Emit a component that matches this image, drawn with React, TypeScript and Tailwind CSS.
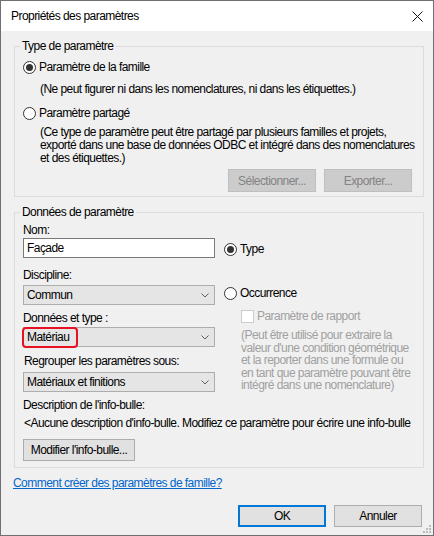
import React from "react";

const Radio = ({ checked }: { checked?: boolean }) => (
  <span className="w-[13px] h-[13px] shrink-0 rounded-full border border-[#333333] bg-white flex items-center justify-center">
    {checked && <span className="w-[7px] h-[7px] rounded-full bg-[#333333]" />}
  </span>
);

const Combo = ({ value, highlight }: { value: string; highlight?: boolean }) => (
  <div className="relative h-[20px] w-[192px] bg-[#e5e5e5] border border-[#adadad] flex items-center pl-[3px]">
    <span>{value}</span>
    <svg className="ml-auto mr-[5px]" width="8" height="5" viewBox="0 0 8 5">
      <path d="M0.5 0.5 L4 4 L7.5 0.5" stroke="#606060" fill="none" />
    </svg>
    {highlight && (
      <span className="absolute left-[-2px] top-[-1px] w-[56px] h-[21px] border-2 border-[#e81123] rounded-[4px]" />
    )}
  </div>
);

const Btn = ({ label, disabled, primary, w }: { label: string; disabled?: boolean; primary?: boolean; w: string }) => (
  <button
    className={
      disabled
        ? `${w} h-[23px] bg-[#cccccc] border border-[#bfbfbf] text-[#838383]`
        : primary
        ? `${w} h-[22px] bg-[#e1e1e1] border-2 border-[#0078d7] text-black`
        : `${w} h-[22px] bg-[#e1e1e1] border border-[#adadad] text-black`
    }
  >
    {label}
  </button>
);

export default function App() {
  return (
    <div className="relative w-[434px] h-[536px] border border-[#707070] bg-[#f0f0f0] text-black text-[12px] leading-[14px] tracking-[-0.55px] font-['Liberation_Sans',Arial,sans-serif] overflow-hidden">
      {/* title bar */}
      <div className="h-[30px] bg-white flex items-center pl-[10px] pr-[10px]">
        <span className="text-[12px]">Propriétés des paramètres</span>
        <svg className="ml-auto" width="11" height="11" viewBox="0 0 11 11">
          <path d="M0.5 0.5 L10.5 10.5 M10.5 0.5 L0.5 10.5" stroke="#111111" strokeWidth="1" />
        </svg>
      </div>

      <div className="pt-[8px] pl-[12px] pr-[9px]">
        <fieldset className="ml-[1px] border border-[#dcdcdc] px-[8px] pb-[4px]">
          <legend className="-ml-[3px] px-[2px] leading-[14px]">Type de paramètre</legend>
          <div className="mt-[6px] h-[16px] flex items-center gap-[3px]">
            <Radio checked />
            <span>Paramètre de la famille</span>
          </div>
          <p className="mt-[7px] pl-[17px] whitespace-nowrap">(Ne peut figurer ni dans les nomenclatures, ni dans les étiquettes.)</p>
          <div className="mt-[9px] h-[16px] flex items-center gap-[3px]">
            <Radio />
            <span>Paramètre partagé</span>
          </div>
          <p className="mt-[5px] pl-[17px] leading-[13px] whitespace-nowrap">
            (Ce type de paramètre peut être partagé par plusieurs familles et projets,
            <br />
            exporté dans une base de données ODBC et intégré dans des nomenclatures
            <br />
            et des étiquettes.)
          </p>
          <div className="mt-[4px] flex justify-end gap-[8px] pr-[3px]">
            <Btn label="Sélectionner..." disabled w="w-[88px]" />
            <Btn label="Exporter..." disabled w="w-[88px]" />
          </div>
        </fieldset>

        <fieldset className="mt-[8px] ml-[1px] border border-[#dcdcdc] px-[8px] pb-[6px]">
          <legend className="-ml-[3px] px-[2px] leading-[14px]">Données de paramètre</legend>
          <div className="flex gap-[9px]">
            <div className="w-[192px] shrink-0">
              <p className="mt-[4px]">Nom:</p>
              <div className="mt-[1px] h-[20px] bg-white border border-[#7a7a7a] flex items-center pl-[3px]">Façade</div>
              <p className="mt-[10px]">Discipline:</p>
              <div className="mt-[3px]">
                <Combo value="Commun" />
              </div>
              <p className="mt-[6px]">Données et type :</p>
              <div className="mt-[2px]">
                <Combo value="Matériau" highlight />
              </div>
              <p className="mt-[7px] pl-[1px]">Regrouper les paramètres sous:</p>
              <div className="mt-[4px]">
                <Combo value="Matériaux et finitions" />
              </div>
            </div>
            <div className="flex-1">
              <div className="mt-[22px] h-[16px] flex items-center gap-[3px]">
                <Radio checked />
                <span>Type</span>
              </div>
              <div className="mt-[28px] h-[16px] flex items-center gap-[3px]">
                <Radio />
                <span>Occurrence</span>
              </div>
              <div className="mt-[8px] h-[14px] pl-[17px] flex items-center gap-[3px] text-[#a0a0a0]">
                <span className="w-[13px] h-[13px] border border-[#cccccc] bg-white" />
                <span>Paramètre de rapport</span>
              </div>
              <p className="mt-[6px] pl-[17px] leading-[12.6px] text-[#a0a0a0] whitespace-nowrap">
                (Peut être utilisé pour extraire la
                <br />
                valeur d'une condition géométrique
                <br />
                et la reporter dans une formule ou
                <br />
                en tant que paramètre pouvant être
                <br />
                intégré dans une nomenclature)
              </p>
            </div>
          </div>
          <p className="mt-[6px]">Description de l'info-bulle:</p>
          <p className="mt-[4px] pl-[1px] whitespace-nowrap overflow-hidden">
            &lt;Aucune description d'info-bulle. Modifiez ce paramètre pour écrire une info-bulle
          </p>
          <div className="mt-[9px]">
            <Btn label="Modifier l'info-bulle..." w="w-[112px] h-[21px]" />
          </div>
        </fieldset>

        <p className="mt-[8px] text-[#0066cc] underline">Comment créer des paramètres de famille?</p>

        <div className="mt-[15px] mr-[2px] flex justify-end gap-[8px]">
          <Btn label="OK" primary w="w-[88px]" />
          <Btn label="Annuler" w="w-[88px]" />
        </div>
      </div>

      <svg className="absolute right-[1px] bottom-[1px]" width="9" height="9" viewBox="0 0 9 9">
        <rect x="6" y="0" width="2" height="2" fill="#bcbcbc" />
        <rect x="3" y="3" width="2" height="2" fill="#bcbcbc" />
        <rect x="6" y="3" width="2" height="2" fill="#bcbcbc" />
        <rect x="0" y="6" width="2" height="2" fill="#bcbcbc" />
        <rect x="3" y="6" width="2" height="2" fill="#bcbcbc" />
        <rect x="6" y="6" width="2" height="2" fill="#bcbcbc" />
      </svg>
    </div>
  );
}
